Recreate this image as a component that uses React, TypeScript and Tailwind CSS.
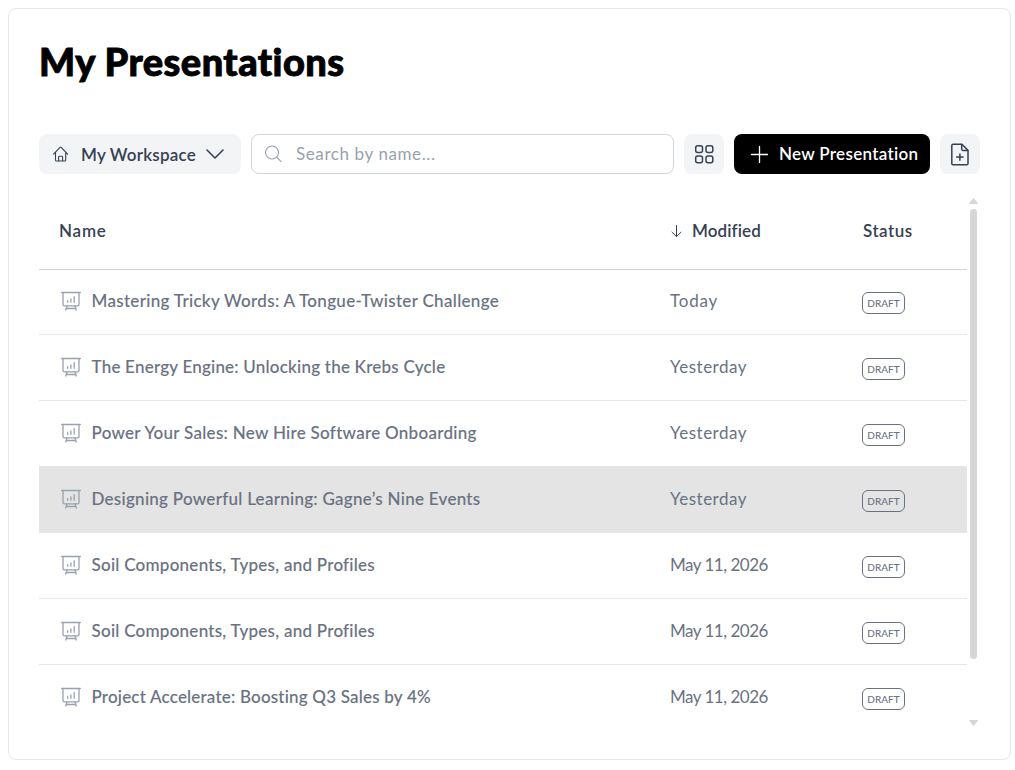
import { clsx } from "clsx";

interface Presentation {
  name: string;
  modified: string;
  nameTracking: string;
  modifiedTracking: string;
  selected?: boolean;
}

const presentations: Presentation[] = [
  { name: "Mastering Tricky Words: A Tongue-Twister Challenge", modified: "Today", nameTracking: "tracking-[0.32px]", modifiedTracking: "tracking-[0.8px]" },
  { name: "The Energy Engine: Unlocking the Krebs Cycle", modified: "Yesterday", nameTracking: "tracking-[0.22px]", modifiedTracking: "tracking-[0.5px]" },
  { name: "Power Your Sales: New Hire Software Onboarding", modified: "Yesterday", nameTracking: "tracking-[0.29px]", modifiedTracking: "tracking-[0.5px]" },
  { name: "Designing Powerful Learning: Gagne’s Nine Events", modified: "Yesterday", nameTracking: "tracking-[0.28px]", modifiedTracking: "tracking-[0.5px]", selected: true },
  { name: "Soil Components, Types, and Profiles", modified: "May 11, 2026", nameTracking: "tracking-[0.26px]", modifiedTracking: "tracking-[-0.5px]" },
  { name: "Soil Components, Types, and Profiles", modified: "May 11, 2026", nameTracking: "tracking-[0.26px]", modifiedTracking: "tracking-[-0.5px]" },
  { name: "Project Accelerate: Boosting Q3 Sales by 4%", modified: "May 11, 2026", nameTracking: "tracking-[0.2px]", modifiedTracking: "tracking-[-0.5px]" },
];

function HomeIcon() {
  return (
    <svg className="h-4 w-4 shrink-0" viewBox="0 0 16 16" fill="none" stroke="currentColor" strokeWidth="1.1" strokeLinecap="round" strokeLinejoin="round">
      <path d="M.6 8.100 7 1.300a.9.9 0 0 1 1.200 0l6.400 6.800M2.500 6.600v7.600c0 .5.3.8.8.8h8.600c.5 0 .8-.3.8-.8V6.600M5.600 15v-4c0-.5.3-.8.8-.8h2.400c.5 0 .8.3.8.8v4" />
    </svg>
  );
}

function ChevronIcon() {
  return (
    <svg className="h-[10px] w-[18px] shrink-0" viewBox="0 0 18 10" fill="none" stroke="currentColor" strokeWidth="1.6" strokeLinecap="round" strokeLinejoin="round">
      <path d="m1 1 8 8 8-8" />
    </svg>
  );
}

function SearchIcon() {
  return (
    <svg className="h-[18px] w-[18px] shrink-0" viewBox="0 0 18 18" fill="none" stroke="currentColor" strokeWidth="1.1" strokeLinecap="round">
      <circle cx="8" cy="7.500" r="6.500" />
      <path d="m12.700 12.200 4.400 4.400" />
    </svg>
  );
}

function GridIcon() {
  return (
    <svg className="h-5 w-5" viewBox="0 0 20 20" fill="none" stroke="currentColor" strokeWidth="1.5">
      <rect x="1.700" y="1.700" width="6.800" height="6.800" rx="2" />
      <rect x="12" y="1.700" width="6.800" height="6.800" rx="2" />
      <rect x="1.700" y="12" width="6.800" height="6.800" rx="2" />
      <rect x="12" y="12" width="6.800" height="6.800" rx="2" />
    </svg>
  );
}

function PlusIcon() {
  return (
    <svg className="h-[18px] w-[18px] shrink-0" viewBox="0 0 18 18" fill="none" stroke="currentColor" strokeWidth="1.300" strokeLinecap="round">
      <path d="M9.500 1.500v16M1.500 9.500h16" />
    </svg>
  );
}

function FilePlusIcon() {
  return (
    <svg className="h-[23px] w-[18px]" viewBox="0 0 18 23" fill="none" stroke="currentColor" strokeWidth="1.5" strokeLinecap="round" strokeLinejoin="round">
      <path d="M2 1.300h8.900l6.100 6.100v13a1.300 1.300 0 0 1-1.300 1.300H2A1.300 1.300 0 0 1 .8 20.400V2.600A1.300 1.300 0 0 1 2 1.300Z" />
      <path d="M10.700 1.400v4.700c0 .8.5 1.300 1.300 1.300h4.800M8.900 10.900v6.400M5.700 14.100h6.400" />
    </svg>
  );
}

function BoardIcon() {
  return (
    <svg className="h-5 w-5 shrink-0 text-gray-400" viewBox="0 0 20 20" fill="none" stroke="currentColor" strokeWidth="1.3" strokeLinecap="round" strokeLinejoin="round">
      <path d="M.7 1.500h18.600M2 1.500v12c0 .8.5 1.300 1.300 1.300h13.400c.8 0 1.300-.5 1.300-1.300v-12" />
      <path d="M6 15l-1.300 4M14 15l1.300 4M5.300 17.500h9.400" />
      <path d="M6.600 11.300V9.600M9.900 11.300V8M13.200 11.300V5.600" />
    </svg>
  );
}

function SortIcon() {
  return (
    <svg className="h-3 w-3 shrink-0" viewBox="0 0 12 12" fill="none" stroke="currentColor" strokeWidth="1" strokeLinecap="round" strokeLinejoin="round">
      <path d="M6.500 .5v11M2 7.200l4.500 4.300L11 7.200" />
    </svg>
  );
}

function Toolbar() {
  return (
    <div className="flex h-10 gap-2.5 text-gray-700">
      <button className="flex w-[202px] items-center rounded-lg bg-gray-100 pl-3.5">
        <HomeIcon />
        <span className="ml-3 w-[115px] pt-px text-left text-[17px] font-semibold tracking-[0.2px] whitespace-nowrap">My Workspace</span>
        <span className="ml-2.5">
          <ChevronIcon />
        </span>
      </button>
      <label className="flex flex-1 items-center rounded-lg border border-gray-300 pl-3 text-gray-400">
        <SearchIcon />
        <span className="ml-3.5 text-[17px] tracking-[0.6px]">Search by name...</span>
      </label>
      <button className="flex w-10 items-center justify-center rounded-lg bg-gray-100">
        <GridIcon />
      </button>
      <button className="flex w-[196px] items-center rounded-lg bg-black pl-4 text-white">
        <PlusIcon />
        <span className="ml-[11px] text-[17px] font-semibold tracking-[0.3px] whitespace-nowrap">New Presentation</span>
      </button>
      <button className="flex w-10 items-center justify-center rounded-lg bg-gray-100">
        <FilePlusIcon />
      </button>
    </div>
  );
}

function Row({ item }: { item: Presentation }) {
  return (
    <div
      className={clsx(
        "flex h-[66px] items-center border-b border-gray-200 pl-5 text-[17px] whitespace-nowrap text-gray-500 last:border-transparent",
        item.selected && "bg-[#e4e4e4]",
      )}
    >
      <div className="flex w-[611px] items-center gap-[11px] pb-0.5 pl-[1.5px]">
        <BoardIcon />
        <span className={clsx("font-medium [-webkit-text-stroke:0.1px]", item.nameTracking)}>{item.name}</span>
      </div>
      <span className={clsx("w-[192px] pb-0.5", item.modifiedTracking)}>{item.modified}</span>
      <span className="mt-[3px] flex h-[22px] w-[43px] items-center justify-center rounded-md border border-gray-500 text-[10px] font-medium">
        DRAFT
      </span>
    </div>
  );
}

export default function App() {
  return (
    <div className="h-[770px] bg-white pt-2 pl-2 font-['Lato',sans-serif]">
      <main className="h-[752px] w-[1003px] rounded-lg border border-gray-200 px-[30px] pt-7">
        <h1 className="h-[97px] text-[38px] leading-[48px] font-black tracking-[0.45px] text-black [-webkit-text-stroke:0.9px]">My Presentations</h1>
        <Toolbar />
        <div className="mt-5 flex">
          <div className="w-[928px]">
            <div className="flex h-[76px] items-center border-b border-gray-300 pb-px pl-5 text-[17px] font-semibold text-gray-700">
              <span className="w-[611px] tracking-[0.8px]">Name</span>
              <span className="flex w-[193px] items-center gap-2.5 tracking-[0.1px]">
                <SortIcon />
                Modified
              </span>
              <span className="tracking-[0.5px]">Status</span>
            </div>
            <div className="-mt-px">
              {presentations.map((item, idx) => (
                <Row key={idx} item={item} />
              ))}
            </div>
          </div>
          {/* scrollbar */}
          <div className="mt-1 ml-[2px] flex w-[9px] flex-col items-center text-[#d6d6d6]">
            <svg className="h-[6px] w-[9px]" viewBox="0 0 9 6" fill="currentColor" stroke="currentColor" strokeWidth="1" strokeLinejoin="round">
              <path d="M4.500 .5 8.500 5.500h-8Z" />
            </svg>
            <div className="mt-[5px] h-[450px] w-[7px] rounded-full bg-[#d6d6d6]" />
            <svg className="mt-[61px] h-[6px] w-[9px]" viewBox="0 0 9 6" fill="currentColor" stroke="currentColor" strokeWidth="1" strokeLinejoin="round">
              <path d="M4.500 5.500 .5 .5h8Z" />
            </svg>
          </div>
        </div>
      </main>
    </div>
  );
}
